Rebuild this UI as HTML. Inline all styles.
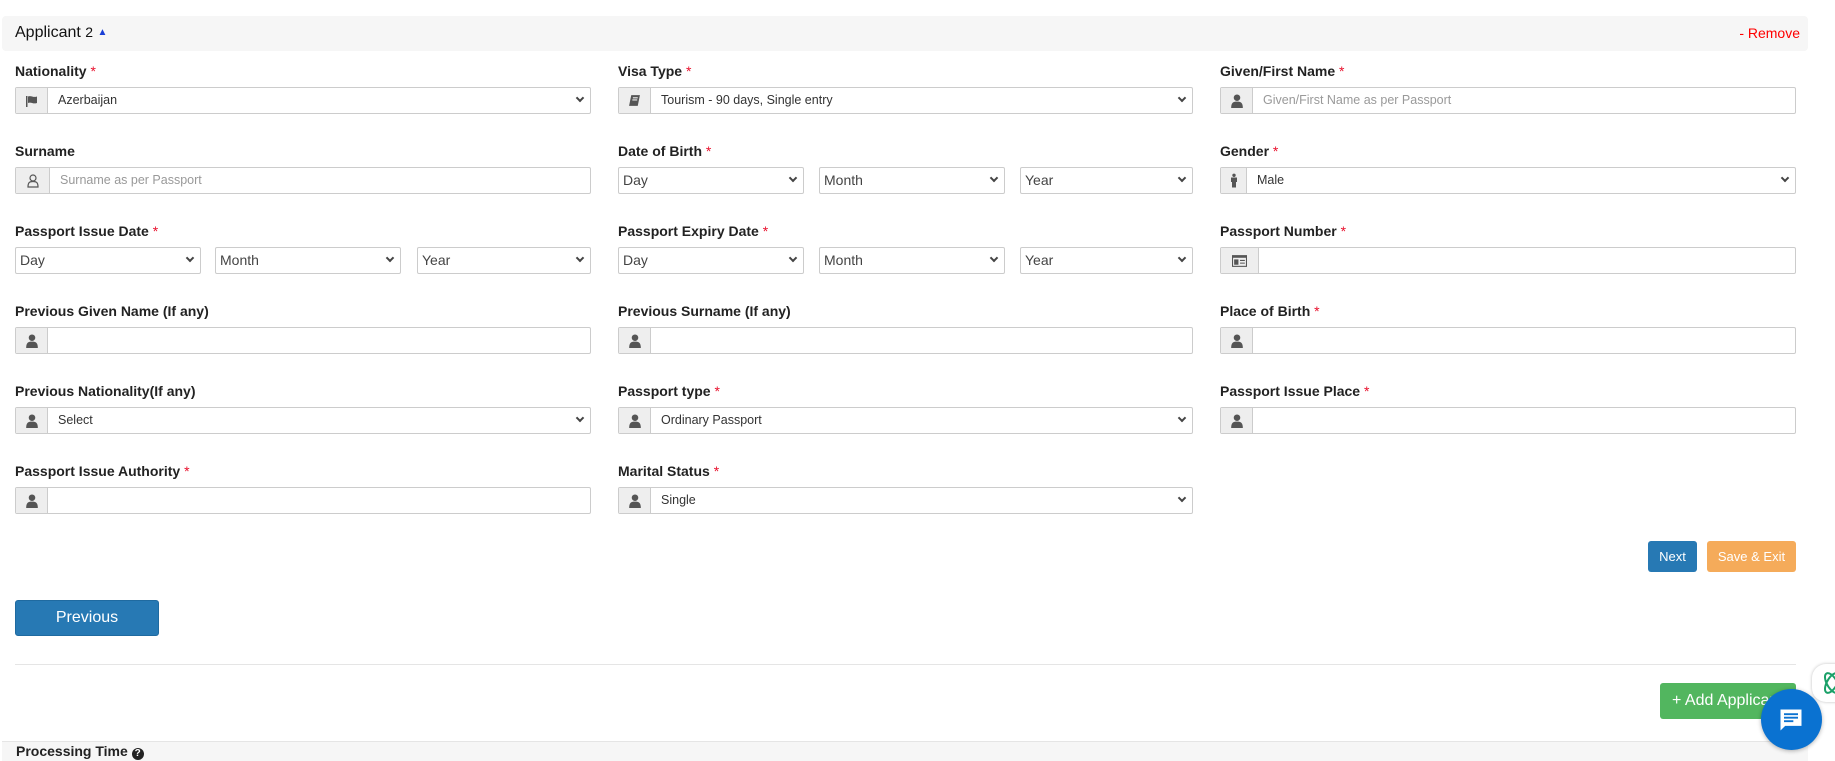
<!DOCTYPE html>
<html><head><meta charset="utf-8"><style>
*{box-sizing:border-box;margin:0;padding:0}
body{width:1835px;height:758px;overflow:hidden;background:#fff;font-family:"Liberation Sans",Arial,sans-serif;color:#333;position:relative}
.hdr{position:absolute;left:2px;top:16px;width:1806px;height:35px;background:#f6f6f6;border-radius:4px}
.hdr .t{position:absolute;left:13px;top:8px;font-size:16px;color:#111}
.hdr .t small{font-size:14px}
.hdr .r{position:absolute;right:8px;top:9px;font-size:14px;color:#f00}
.lab{position:absolute;font-size:14px;font-weight:bold;color:#222}
.lab i{color:#e8102c;font-style:normal;font-weight:normal}
.f{position:absolute;height:27px;border:1px solid #ccc;border-radius:2px;display:flex;background:#fff;font-size:12.5px;color:#333}
.ad{width:32px;background:#eee;border-right:1px solid #ccc;display:flex;align-items:center;justify-content:center;flex:none}
.tx{padding-left:10px;line-height:25px;flex:1;white-space:nowrap}
.ph{color:#999}
.ch{position:absolute;right:7px;top:7px;width:6px;height:6px;border-right:2px solid #444;border-bottom:2px solid #444;transform:rotate(45deg)}
.sel .tx{padding-left:4px;font-size:14px;color:#444}
.btn{position:absolute;color:#fff;border-radius:3px;text-align:center}
</style></head><body>
<div class="hdr"><div class="t">Applicant <small>2</small> <span style="color:#1a3fd6;font-size:10px;position:relative;top:-2px">&#9650;</span></div><div class="r">- Remove</div></div>

<svg width="0" height="0" style="position:absolute"><defs>
<symbol id="u" viewBox="0 0 12 12"><circle cx="6" cy="3.2" r="2.8" fill="#555"/><path d="M1 12 C1 7.5 2.5 6.5 6 6.5 C9.5 6.5 11 7.5 11 12Z" fill="#555"/></symbol>
</defs></svg>

<div class="lab" style="left:15px;top:63px">Nationality <i>*</i></div>
<div class="f" style="left:15px;top:87px;width:576px"><div class="ad"><svg width="14" height="12" viewBox="0 0 14 12"><rect x="1" y="1" width="1.5" height="11" fill="#555"/><path d="M3 1.5 C6 0 8 3 12 1.5 V8 C8 9.5 6 6.5 3 8Z" fill="#555"/></svg></div><div class="tx">Azerbaijan</div><span class="ch"></span></div>
<div class="lab" style="left:618px;top:63px">Visa Type <i>*</i></div>
<div class="f" style="left:618px;top:87px;width:575px"><div class="ad"><svg width="13" height="13" viewBox="0 0 12 12"><path d="M3 1 H11 L9 11 H1Z" fill="#555"/><path d="M4.5 3.5 H9 M4 5.5 H8.5" stroke="#eee" stroke-width="1"/></svg></div><div class="tx">Tourism - 90 days, Single entry</div><span class="ch"></span></div>
<div class="lab" style="left:1220px;top:63px">Given/First Name <i>*</i></div>
<div class="f" style="left:1220px;top:87px;width:576px"><div class="ad"><svg width="14" height="14"><use href="#u"/></svg></div><div class="tx ph">Given/First Name as per Passport</div></div>

<div class="lab" style="left:15px;top:143px">Surname</div>
<div class="f" style="left:15px;top:167px;width:576px"><div class="ad" style="width:34px"><svg width="12" height="14" viewBox="0 0 12 14"><circle cx="6" cy="4" r="3" fill="none" stroke="#555" stroke-width="1.2"/><path d="M1 13 C1 8.5 2.5 7.5 6 7.5 C9.5 7.5 11 8.5 11 13Z" fill="none" stroke="#555" stroke-width="1.2"/></svg></div><div class="tx ph">Surname as per Passport</div></div>
<div class="lab" style="left:618px;top:143px">Date of Birth <i>*</i></div>
<div class="f sel" style="left:618px;top:167px;width:186px"><div class="tx">Day</div><span class="ch"></span></div>
<div class="f sel" style="left:819px;top:167px;width:186px"><div class="tx">Month</div><span class="ch"></span></div>
<div class="f sel" style="left:1020px;top:167px;width:173px"><div class="tx">Year</div><span class="ch"></span></div>
<div class="lab" style="left:1220px;top:143px">Gender <i>*</i></div>
<div class="f" style="left:1220px;top:167px;width:576px"><div class="ad" style="width:26px"><svg width="8" height="15" viewBox="0 0 8 14"><circle cx="4" cy="1.8" r="1.7" fill="#555"/><path d="M1 4 H7 V8.5 H6 V14 H2 V8.5 H1Z" fill="#555"/></svg></div><div class="tx">Male</div><span class="ch"></span></div>

<div class="lab" style="left:15px;top:223px">Passport Issue Date <i>*</i></div>
<div class="f sel" style="left:15px;top:247px;width:186px"><div class="tx">Day</div><span class="ch"></span></div>
<div class="f sel" style="left:215px;top:247px;width:186px"><div class="tx">Month</div><span class="ch"></span></div>
<div class="f sel" style="left:417px;top:247px;width:174px"><div class="tx">Year</div><span class="ch"></span></div>
<div class="lab" style="left:618px;top:223px">Passport Expiry Date <i>*</i></div>
<div class="f sel" style="left:618px;top:247px;width:186px"><div class="tx">Day</div><span class="ch"></span></div>
<div class="f sel" style="left:819px;top:247px;width:186px"><div class="tx">Month</div><span class="ch"></span></div>
<div class="f sel" style="left:1020px;top:247px;width:173px"><div class="tx">Year</div><span class="ch"></span></div>
<div class="lab" style="left:1220px;top:223px">Passport Number <i>*</i></div>
<div class="f" style="left:1220px;top:247px;width:576px"><div class="ad" style="width:38px"><svg width="15" height="12" viewBox="0 0 14 11"><rect x="0.5" y="0.5" width="13" height="10" fill="none" stroke="#555"/><rect x="0.5" y="0.5" width="13" height="2" fill="#555"/><rect x="2" y="4" width="4" height="5" fill="#555"/><path d="M7.5 5 H12 M7.5 7.5 H12" stroke="#555"/></svg></div><div class="tx"></div></div>

<div class="lab" style="left:15px;top:303px">Previous Given Name (If any)</div>
<div class="f" style="left:15px;top:327px;width:576px"><div class="ad"><svg width="14" height="14"><use href="#u"/></svg></div><div class="tx"></div></div>
<div class="lab" style="left:618px;top:303px">Previous Surname (If any)</div>
<div class="f" style="left:618px;top:327px;width:575px"><div class="ad"><svg width="14" height="14"><use href="#u"/></svg></div><div class="tx"></div></div>
<div class="lab" style="left:1220px;top:303px">Place of Birth <i>*</i></div>
<div class="f" style="left:1220px;top:327px;width:576px"><div class="ad"><svg width="14" height="14"><use href="#u"/></svg></div><div class="tx"></div></div>

<div class="lab" style="left:15px;top:383px">Previous Nationality(If any)</div>
<div class="f" style="left:15px;top:407px;width:576px"><div class="ad"><svg width="14" height="14"><use href="#u"/></svg></div><div class="tx">Select</div><span class="ch"></span></div>
<div class="lab" style="left:618px;top:383px">Passport type <i>*</i></div>
<div class="f" style="left:618px;top:407px;width:575px"><div class="ad"><svg width="14" height="14"><use href="#u"/></svg></div><div class="tx">Ordinary Passport</div><span class="ch"></span></div>
<div class="lab" style="left:1220px;top:383px">Passport Issue Place <i>*</i></div>
<div class="f" style="left:1220px;top:407px;width:576px"><div class="ad"><svg width="14" height="14"><use href="#u"/></svg></div><div class="tx"></div></div>

<div class="lab" style="left:15px;top:463px">Passport Issue Authority <i>*</i></div>
<div class="f" style="left:15px;top:487px;width:576px"><div class="ad"><svg width="14" height="14"><use href="#u"/></svg></div><div class="tx"></div></div>
<div class="lab" style="left:618px;top:463px">Marital Status <i>*</i></div>
<div class="f" style="left:618px;top:487px;width:575px"><div class="ad"><svg width="14" height="14"><use href="#u"/></svg></div><div class="tx">Single</div><span class="ch"></span></div>

<div class="btn" style="left:1648px;top:541px;width:49px;height:31px;background:#2779b4;line-height:31px;font-size:13px">Next</div>
<div class="btn" style="left:1707px;top:541px;width:89px;height:31px;background:#f5ab5a;line-height:31px;font-size:13px">Save &amp; Exit</div>
<div class="btn" style="left:15px;top:600px;width:144px;height:36px;background:#2779b4;line-height:34px;font-size:16px;border:1px solid #1f6aa0">Previous</div>
<div style="position:absolute;left:15px;top:664px;width:1781px;height:1px;background:#e5e5e5"></div>
<div class="btn" style="left:1660px;top:683px;width:136px;height:36px;background:#52b65f;line-height:36px;font-size:16px;text-align:left;padding-left:12px;overflow:hidden;white-space:nowrap">+ Add Applicant</div>
<div style="position:absolute;left:2px;top:741px;width:1806px;height:20px;background:#f6f6f6;border-top:1px solid #e5e5e5"></div>
<div class="lab" style="left:16px;top:743px;font-size:14px">Processing Time <span style="display:inline-block;width:12px;height:12px;border-radius:50%;background:#222;color:#fff;font-size:10px;text-align:center;line-height:12px">?</span></div>
<div style="position:absolute;left:1812px;top:664px;width:40px;height:38px;background:#fff;border-radius:14px;box-shadow:0 0 3px rgba(0,0,0,.25)"></div>
<svg style="position:absolute;left:1822px;top:670px" width="14" height="26" viewBox="0 0 14 26"><ellipse cx="10" cy="13" rx="5" ry="11" fill="none" stroke="#1aa068" stroke-width="2" transform="rotate(-30 10 13)"/><ellipse cx="10" cy="13" rx="5" ry="11" fill="none" stroke="#1aa068" stroke-width="2" transform="rotate(30 10 13)"/></svg>
<div style="position:absolute;left:1761px;top:689px;width:61px;height:61px;border-radius:50%;background:#0a72d1;box-shadow:0 1px 4px rgba(0,0,0,.3)"></div>
<svg style="position:absolute;left:1777px;top:706px" width="28" height="28" viewBox="0 0 24 24"><path d="M3 3 H21 V17 H7 L3 21Z" fill="#fff"/><path d="M6 7 H18 M6 10 H18 M6 13 H14" stroke="#0a72d1" stroke-width="1.6"/></svg>
</body></html>
